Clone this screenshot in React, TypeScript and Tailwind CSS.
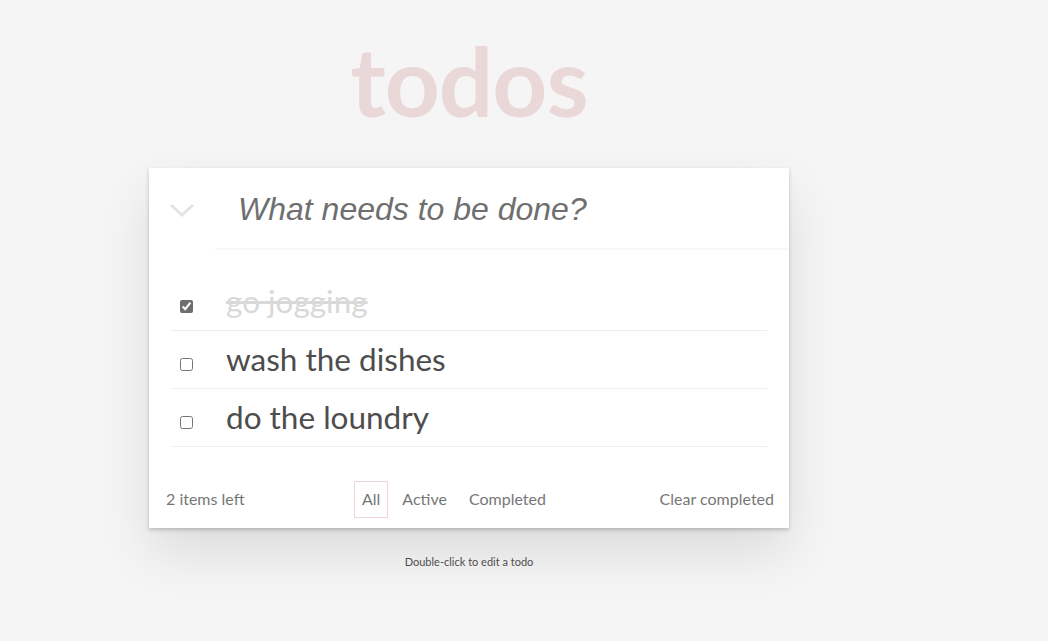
import React from "react";

const TODOS = [
  { title: "go jogging", done: true },
  { title: "wash the dishes", done: false },
  { title: "do the loundry", done: false },
];

const FILTERS = ["All", "Active", "Completed"];

export default function App() {
  return (
    <div className="min-h-[641px] bg-[#f5f5f5] font-['Lato',sans-serif] text-[#4d4d4d]">
      <div className="ml-[149px] w-[640px] pt-[22px]">
        {/* Title */}
        <h1 className="h-[146px] text-center text-[96px] font-bold leading-[116px] tracking-[-1px] text-[rgba(175,47,47,0.15)]">
          todos
        </h1>

        {/* Card */}
        <div className="bg-white shadow-[0_2px_4px_0_rgba(0,0,0,0.2),0_25px_50px_0_rgba(0,0,0,0.1)]">
          {/* Header input row */}
          <div className="flex h-[82px]">
            <div className="flex w-[66px] items-center justify-center pt-[3px]">
              <svg width="26" height="15" viewBox="0 0 26 15" fill="none">
                <path d="M2 2 L13 12 L24 2" stroke="#e3e3e3" strokeWidth="3" />
              </svg>
            </div>
            <div className="flex flex-1 items-center pl-[23px] shadow-[inset_0_-2px_1px_rgba(0,0,0,0.03)]">
              <span className="font-['Liberation_Sans',sans-serif] text-[32px] italic text-[#6f6f6f]">
                What needs to be done?
              </span>
            </div>
          </div>

          {/* Todo list */}
          <ul className="px-[22px] pt-[23px]">
            {TODOS.map((todo) => (
              <li
                key={todo.title}
                className="flex h-[58px] items-center border-b border-[#ededed]"
              >
                <div className="flex w-[55px] pl-[9px] pt-[9px]">
                  <input
                    type="checkbox"
                    defaultChecked={todo.done}
                    className="h-[13px] w-[13px] accent-[#6e6e6e]"
                  />
                </div>
                <span
                  className={
                    todo.done
                      ? "text-[31.5px] leading-none text-[#d9d9d9] line-through"
                      : "text-[31.5px] leading-none text-[#4d4d4d]"
                  }
                >
                  {todo.title}
                </span>
              </li>
            ))}
          </ul>

          {/* Footer */}
          <div className="flex h-[81px] items-center pl-[17px] pr-[15px] pt-[23px] text-[16px] text-[#777]">
            <span className="w-[185px]">2 items left</span>
            <div className="flex items-center">
              {FILTERS.map((f) => (
                <span
                  key={f}
                  className={
                    f === "All"
                      ? "mx-[3px] flex h-[37px] items-center rounded-[1px] border border-[rgba(175,47,47,0.2)] px-[7px]"
                      : "mx-[3px] flex h-[37px] items-center border border-transparent px-[7px]"
                  }
                >
                  {f}
                </span>
              ))}
            </div>
            <span className="ml-auto">Clear completed</span>
          </div>
        </div>

        <p className="mt-[26px] text-center text-[11px] text-[#4d4d4d]">
          Double-click to edit a todo
        </p>
      </div>
    </div>
  );
}
